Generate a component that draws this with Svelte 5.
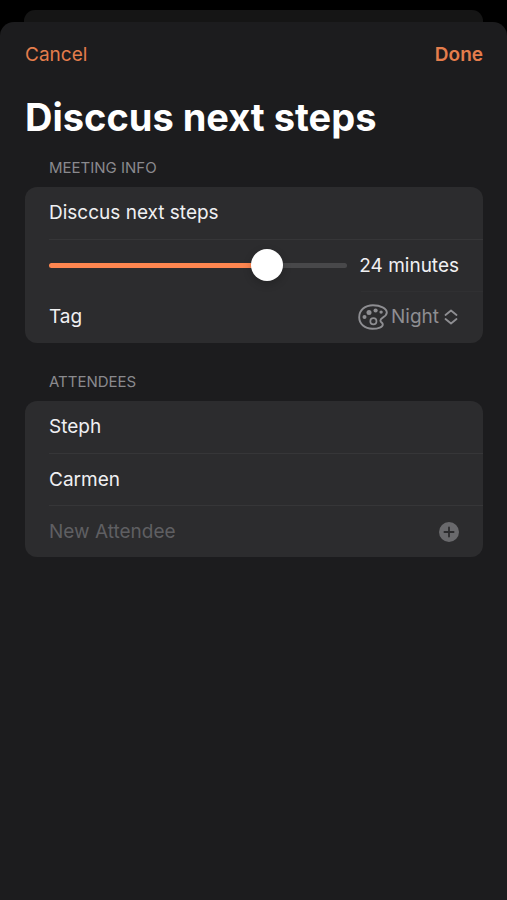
<script lang="ts">
  const tags = ['Night', 'Orange', 'Poppy', 'Sky', 'Teal']
  const minMinutes = 5
  const maxMinutes = 30

  let title = $state('Disccus next steps')
  let minutes = $state(24)
  let tag = $state('Night')
  let attendees = $state(['Steph', 'Carmen'])
  let newAttendee = $state('')

  let progress = $derived((minutes - minMinutes) / (maxMinutes - minMinutes))

  function addAttendee(e: Event) {
    e.preventDefault()
    const name = newAttendee.trim()
    if (!name) return
    attendees.push(name)
    newAttendee = ''
  }
</script>

<div class="screen">
  <div class="sheet-behind"></div>
  <main class="sheet">
    <header class="toolbar">
      <button type="button">Cancel</button>
      <button type="button" class="done">Done</button>
    </header>

    <h1>{title}</h1>

    <section>
      <h2>Meeting Info</h2>
      <div class="card">
        <div class="row">
          <input class="text" type="text" aria-label="Title" bind:value={title} />
        </div>
        <div class="row">
          <input
            class="slider"
            type="range"
            min={minMinutes}
            max={maxMinutes}
            step="1"
            aria-label="Length"
            bind:value={minutes}
            style="--progress: {progress}"
          />
          <span class="minutes">{minutes} minutes</span>
        </div>
        <div class="row short-line">
          <label class="grow" for="tag">Tag</label>
          <div class="picker">
            <svg class="palette" viewBox="0 0 30 26" aria-hidden="true">
              <path
                d="M15 1.2C7 1.2 1.2 6.2 1.2 13.2C1.2 20 6.8 24.8 14.4 24.8C20.4 24.8 24.8 22.9 24.8 20.4C24.8 18.6 22.4 18.4 22.4 16.4C22.4 13.4 28.8 13.2 28.8 8.6C28.8 4.4 22.4 1.2 15 1.2Z"
                fill="none"
                stroke="currentColor"
                stroke-width="1.9"
              />
              <circle cx="15.4" cy="17.2" r="3.1" fill="none" stroke="currentColor" stroke-width="1.7" />
              <circle cx="6.5" cy="13" r="2" fill="currentColor" />
              <circle cx="11" cy="8.4" r="2.5" fill="currentColor" />
              <circle cx="17.6" cy="6.5" r="2.1" fill="currentColor" />
              <circle cx="23.1" cy="8.1" r="1.7" fill="currentColor" />
            </svg>
            <select id="tag" bind:value={tag}>
              {#each tags as t}
                <option value={t}>{t}</option>
              {/each}
            </select>
            <svg class="chevrons" viewBox="0 0 14 16" aria-hidden="true">
              <path
                d="M1.5 6L7 1.5L12.5 6M1.5 10L7 14.5L12.5 10"
                fill="none"
                stroke="currentColor"
                stroke-width="1.8"
                stroke-linecap="round"
                stroke-linejoin="round"
              />
            </svg>
          </div>
        </div>
      </div>
    </section>

    <section>
      <h2>Attendees</h2>
      <div class="card">
        {#each attendees as attendee}
          <div class="row">{attendee}</div>
        {/each}
        <form class="row" onsubmit={addAttendee}>
          <input
            class="text"
            type="text"
            aria-label="New Attendee"
            placeholder="New Attendee"
            bind:value={newAttendee}
          />
          <button class="add" aria-label="Add attendee" disabled={!newAttendee.trim()}>
            <svg viewBox="0 0 20 20" aria-hidden="true">
              <circle cx="10" cy="10" r="10" fill="currentColor" />
              <path d="M10 5.4V14.6M5.4 10H14.6" stroke="#2c2c2e" stroke-width="1.8" stroke-linecap="round" />
            </svg>
          </button>
        </form>
      </div>
    </section>
  </main>
</div>

<style>
  :global(body) {
    margin: 0;
    background: #000;
  }

  .screen {
    display: flex;
    flex-direction: column;
    min-height: 100vh;
    box-sizing: border-box;
    padding-top: 10px;
    background: #000;
    color: #f0f0f2;
    font-family: Inter, 'Liberation Sans', sans-serif;
    font-size: 19px;
    line-height: 24px;
  }

  .sheet-behind {
    height: 12px;
    margin: 0 24px;
    border-radius: 11px 11px 0 0;
    background: #151515;
  }

  .sheet {
    flex: 1;
    padding: 21px 24px 20px 25px;
    border-radius: 14px 14px 0 0;
    background: #1c1c1e;
  }

  button,
  input,
  select {
    margin: 0;
    padding: 0;
    border: 0;
    background: none;
    color: inherit;
    font: inherit;
    outline: none;
  }

  .toolbar {
    display: flex;
    justify-content: space-between;
    color: #e47d4c;
  }

  .done {
    font-weight: 600;
  }

  h1 {
    margin: 24px 0 15px;
    color: #fff;
    font-size: 38px;
    line-height: 52px;
    font-weight: 700;
  }

  h2 {
    margin: 0 24px 9px;
    color: #8a8a8e;
    font-size: 15px;
    line-height: 20px;
    font-weight: 400;
    text-transform: uppercase;
  }

  section + section {
    margin-top: 29px;
  }

  .card {
    border-radius: 12px;
    background: #2c2c2e;
  }

  .row {
    display: flex;
    align-items: center;
    height: 52px;
    margin-left: 24px;
    padding-right: 24px;
    box-sizing: border-box;
  }

  .row + .row {
    border-top: 1px solid #363638;
  }

  .row + .short-line {
    border-top: 0;
    background: linear-gradient(#303032, #303032) right top / 122px 1px no-repeat;
  }

  .text {
    flex: 1;
    min-width: 0;
  }

  .text::placeholder {
    color: #5f5f62;
    opacity: 1;
  }

  .slider {
    flex: 1;
    min-width: 0;
    height: 32px;
    appearance: none;
  }

  .slider::-webkit-slider-runnable-track {
    height: 5px;
    border-radius: 3px;
    background: linear-gradient(
      to right,
      #fe8650 calc(16px + (100% - 32px) * var(--progress)),
      #48484a 0
    );
  }

  .slider::-webkit-slider-thumb {
    width: 32px;
    height: 32px;
    margin-top: -14px;
    border-radius: 50%;
    background: #fff;
    box-shadow: 0 3px 8px rgba(0, 0, 0, 0.2);
    appearance: none;
  }

  .minutes {
    margin-left: 12px;
    white-space: nowrap;
  }

  .grow {
    flex: 1;
  }

  .picker {
    position: relative;
    display: flex;
    align-items: center;
    gap: 3px;
    color: #8e8e92;
  }

  .palette {
    width: 30px;
    height: 26px;
  }

  select {
    field-sizing: content;
    padding-right: 20px;
    appearance: none;
  }

  .chevrons {
    position: absolute;
    right: 1px;
    width: 14px;
    height: 16px;
    pointer-events: none;
  }

  .add {
    width: 20px;
    height: 20px;
    color: #69696c;
  }

  .add svg {
    display: block;
  }
</style>
